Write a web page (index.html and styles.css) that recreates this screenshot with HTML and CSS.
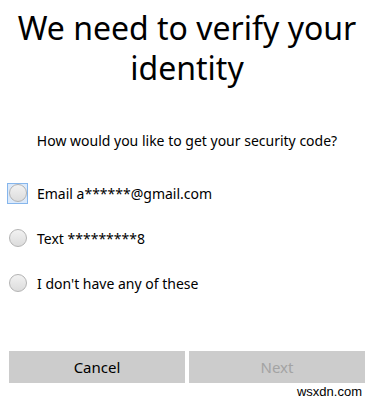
FILE: index.html
```html
<!DOCTYPE html>
<html lang="en">
<head>
    <meta charset="UTF-8">
    <title>Verify your identity</title>
    <link rel="stylesheet" href="styles.css">
</head>
<body>
    <div id="dialog">
        <h1 id="title">We need to verify your identity</h1>
        <p id="question">How would you like to get your security code?</p>
        <form id="options">
            <label class="option">
                <span class="focus-ring"><input type="radio" name="method" value="email"></span>
                <span>Email a******@gmail.com</span>
            </label>
            <label class="option">
                <span class="focus-ring off"><input type="radio" name="method" value="text"></span>
                <span>Text *********8</span>
            </label>
            <label class="option">
                <span class="focus-ring off"><input type="radio" name="method" value="none"></span>
                <span>I don't have any of these</span>
            </label>
        </form>
        <div id="actions">
            <button class="btn">Cancel</button>
            <button class="btn" disabled>Next</button>
        </div>
        <div id="credit">wsxdn.com</div>
    </div>
</body>
</html>
```

FILE: styles.css
```css
body {
    margin: 0;
    background: white;
    font-family: "Noto Sans", "Open Sans", sans-serif;
    color: #000;
}
#dialog {
    width: 374px;
    height: 402px;
    display: flex;
    flex-direction: column;
}
#title {
    margin: 0;
    padding: 8px 10px 0;
    font-size: 32px;
    font-weight: 400;
    line-height: 40px;
    text-align: center;
}
#question {
    margin: 43px 0 0;
    font-size: 14px;
    line-height: 20px;
    text-align: center;
}
#options {
    display: flex;
    flex-direction: column;
    gap: 25px;
    margin-top: 32px;
    padding-left: 7px;
}
.option {
    display: flex;
    align-items: center;
    gap: 9px;
    height: 20px;
    font-size: 14px;
}
.focus-ring {
    display: flex;
    align-items: center;
    justify-content: center;
    width: 19px;
    height: 19px;
    border: 1px solid #86b6ec;
    background: #dbe9fa;
}
.focus-ring.off {
    border-color: transparent;
    background: none;
}
.option input {
    appearance: none;
    margin: 0;
    width: 18px;
    height: 18px;
    border-radius: 50%;
    border: 1px solid #b3b3b3;
    background: linear-gradient(#f2f2f2, #dcdcdc);
}
#actions {
    display: flex;
    gap: 4px;
    margin-top: auto;
    padding: 0 9px;
}
.btn {
    flex: 1;
    height: 32px;
    border: none;
    background: #cccccc;
    font-family: inherit;
    font-size: 15px;
    color: #000;
}
.btn:disabled {
    color: #a3a3a3;
}
#credit {
    height: 19px;
    padding-right: 12px;
    text-align: right;
    font-family: "Liberation Sans", sans-serif;
    font-size: 13px;
    line-height: 18px;
}
```
